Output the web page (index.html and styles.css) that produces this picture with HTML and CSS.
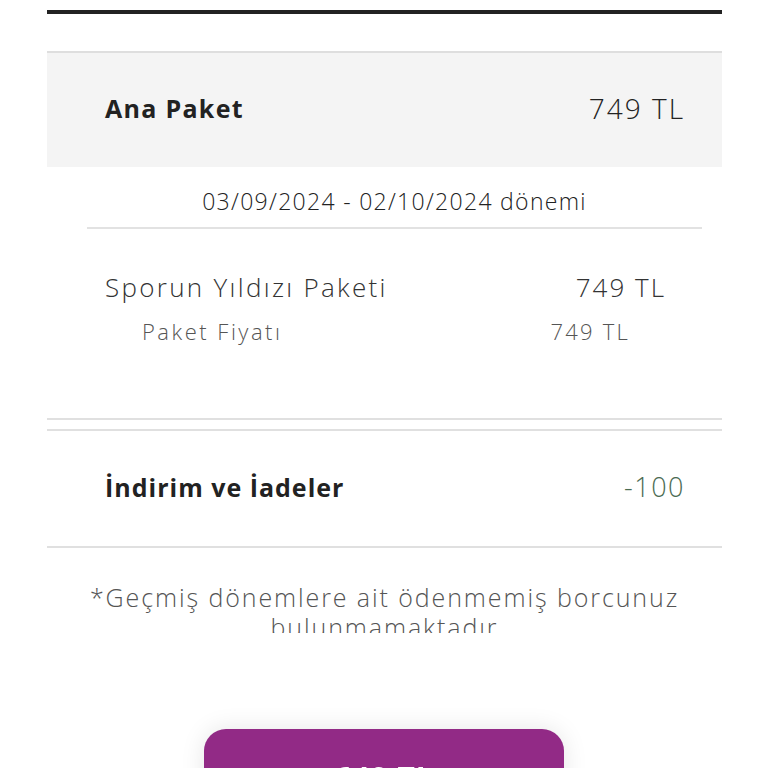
FILE: index.html
```html
<!DOCTYPE html>
<html lang="tr">
<head>
<meta charset="utf-8">
<link rel="stylesheet" href="styles.css">
</head>
<body>
<div class="page">
  <div class="topbar"></div>
  <div class="section-main">
    <div class="row-head">
      <span class="label-bold">Ana Paket</span>
      <span class="amount">749 TL</span>
    </div>
  </div>
  <div class="period">03/09/2024 - 02/10/2024 dönemi</div>
  <div class="package">
    <div class="pkg-row">
      <span class="pkg-name">Sporun Yıldızı Paketi</span>
      <span class="pkg-amount">749 TL</span>
    </div>
    <div class="sub-row">
      <span class="sub-name">Paket Fiyatı</span>
      <span class="sub-amount">749 TL</span>
    </div>
  </div>
  <div class="discount">
    <span class="label-bold wide">İndirim ve İadeler</span>
    <span class="amount green">-100</span>
  </div>
  <div class="note">*Geçmiş dönemlere ait ödenmemiş borcunuz bulunmamaktadır</div>
</div>
<div class="footer">
  <button class="pay-btn">649 TL</button>
</div>
</body>
</html>
```
FILE: styles.css
```css
html, body {
  margin: 0;
  padding: 0;
  background: #fff;
  font-family: "Open Sans", "Noto Sans", sans-serif;
  color: #222;
}
.page {
  width: 675px;
  margin: 0 auto;
  padding-top: 10px;
  padding-left: 1px;
}
.topbar {
  height: 4px;
  background: #222;
}
.section-main {
  margin-top: 37px;
  border-top: 2px solid #dedede;
  background: #f4f4f4;
  height: 114px;
  display: flex;
  align-items: center;
}
.row-head {
  flex: 1;
  display: flex;
  justify-content: space-between;
  align-items: center;
  padding: 0 39px 4px 58px;
}
.label-bold {
  font-weight: 700;
  font-size: 25px;
  letter-spacing: 1.3px;
  color: #222;
}
.label-bold.wide {
  letter-spacing: 1px;
}
.amount {
  font-size: 28px;
  font-weight: 300;
  letter-spacing: 2px;
  color: #222;
  margin-right: -2px;
}
.amount.green {
  color: #4b6b52;
  font-size: 27px;
  letter-spacing: 1.5px;
}
.period {
  margin: 0 20px 0 40px;
  height: 62px;
  box-sizing: border-box;
  padding-top: 8px;
  border-bottom: 2px solid #e2e2e2;
  display: flex;
  align-items: center;
  justify-content: center;
  font-size: 23px;
  font-weight: 300;
  letter-spacing: 1.3px;
  color: #222;
}
.package {
  height: 191px;
  border-bottom: 2px solid #e0e0e0;
  box-sizing: border-box;
  padding: 38px 58px 0 58px;
}
.pkg-row {
  display: flex;
  justify-content: space-between;
  align-items: center;
  height: 40px;
  padding-right: 0;
  margin-right: -2px;
}
.pkg-name, .pkg-amount {
  font-size: 26px;
  font-weight: 300;
  letter-spacing: 2.3px;
  color: #333;
}
.pkg-amount {
  letter-spacing: 2px;
}
.sub-row {
  display: flex;
  justify-content: space-between;
  align-items: center;
  height: 40px;
  margin-top: 4px;
  padding-left: 37px;
  padding-right: 34px;
}
.sub-name, .sub-amount {
  font-size: 22px;
  font-weight: 300;
  letter-spacing: 2.5px;
  color: #555;
}
.sub-amount {
  letter-spacing: 2.2px;
}
.discount {
  margin-top: 9px;
  border-top: 2px solid #e0e0e0;
  border-bottom: 2px solid #e0e0e0;
  height: 115px;
  box-sizing: content-box;
  display: flex;
  justify-content: space-between;
  align-items: center;
  padding: 0 39px 0 58px;
}
.discount > span {
  margin-bottom: 4px;
}
.note {
  margin-top: 34px;
  text-align: center;
  font-size: 25px;
  font-weight: 300;
  letter-spacing: 1.9px;
  line-height: 30px;
  color: #555;
  padding: 0 4px;
}
.footer {
  position: fixed;
  left: 0;
  right: 0;
  top: 633px;
  bottom: 0;
  background: #fff;
  display: flex;
  justify-content: center;
  padding-top: 96px;
  box-sizing: border-box;
}
.pay-btn {
  width: 360px;
  height: 80px;
  border: none;
  border-radius: 22px;
  background: #922a86;
  color: #fff;
  font-family: "Open Sans", sans-serif;
  font-weight: 700;
  font-size: 30px;
  letter-spacing: 1px;
  padding: 16px 0 0 0;
  box-shadow: 0 0 24px rgba(0,0,0,0.10);
}
```
